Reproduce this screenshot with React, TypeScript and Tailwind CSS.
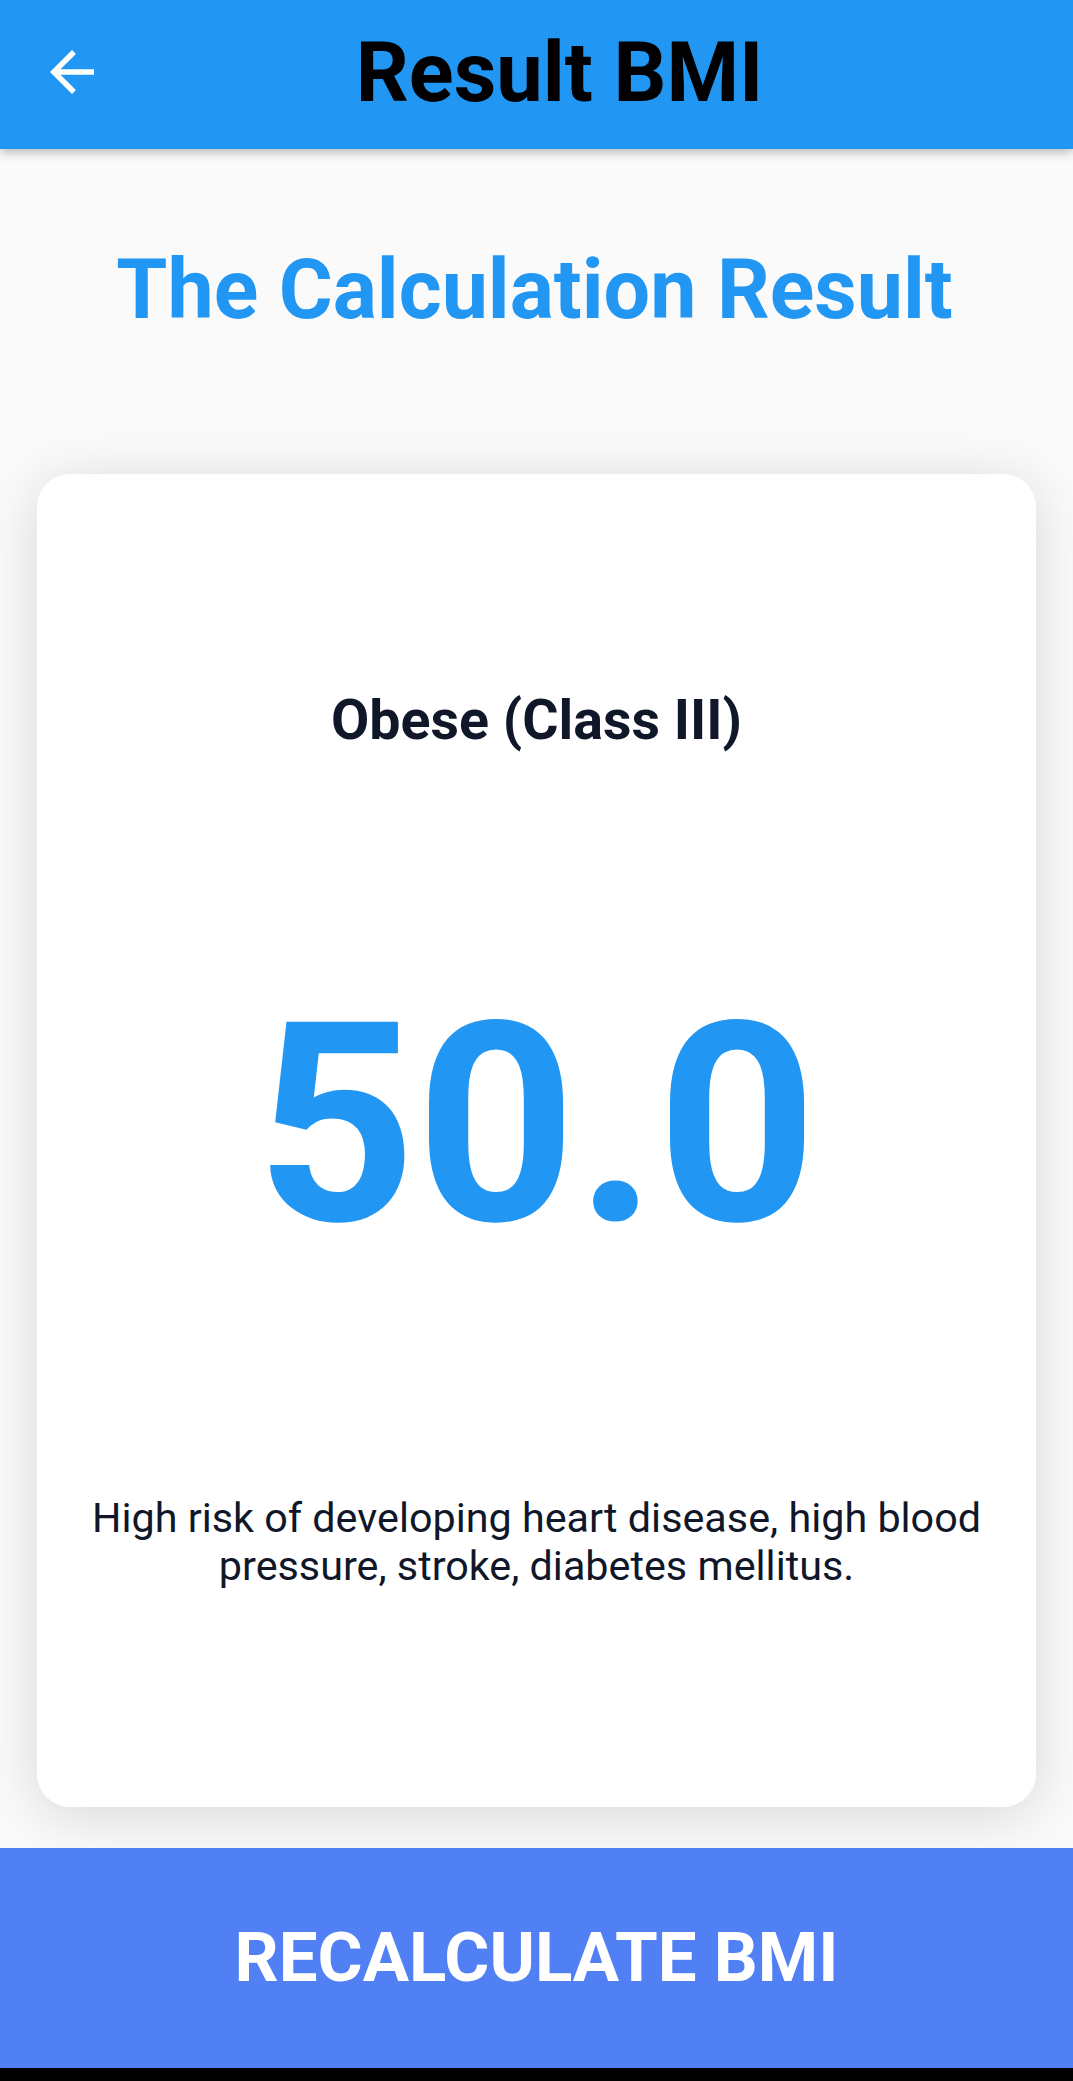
// Result screen of the BMI calculator: app bar, heading, result card, action bar.

type Result = {
  category: string;
  value: number;
  advice: string;
};

const result: Result = {
  category: "Obese (Class III)",
  value: 50.0,
  advice: "High risk of developing heart disease, high blood pressure, stroke, diabetes mellitus.",
};

function BackIcon() {
  return (
    <svg viewBox="0 0 24 24" className="h-[66px] w-[66px] fill-white">
      <path d="M20 11H7.83l5.59-5.59L12 4l-8 8 8 8 1.41-1.41L7.83 13H20v-2z" />
    </svg>
  );
}

function AppBar() {
  return (
    <header className="relative z-10 flex h-[149px] items-center bg-[#2196F3] pb-[5px] shadow-[0_3px_10px_rgba(0,0,0,0.28)]">
      <button type="button" className="absolute left-[39px] top-[39px] flex items-center justify-center">
        <BackIcon />
      </button>
      <h1 className="w-full pl-[46px] text-center text-[83px] font-bold leading-none text-black">Result BMI</h1>
    </header>
  );
}

function ResultCard({ data }: { data: Result }) {
  return (
    <section className="mx-[37px] flex h-[1333px] flex-col items-center rounded-[33px] bg-white px-[36px] shadow-[0_8px_55px_rgba(0,0,0,0.14)]">
      <p className="mt-[219px] text-[55.5px] font-bold leading-none text-[#0F1729]">{data.category}</p>
      <p className="mt-[237px] text-[279px] font-bold leading-none text-[#2196F3]">{data.value.toFixed(1)}</p>
      <p className="mt-[230px] text-center text-[41.3px] leading-[48px] text-[#0F1729]">{data.advice}</p>
    </section>
  );
}

export default function App() {
  return (
    <div className="flex min-h-screen flex-col bg-[#FAFAFA] font-['Roboto',sans-serif]">
      <AppBar />
      <h2 className="mt-[100px] pr-[4px] text-center text-[82.5px] font-bold leading-none text-[#2196F3]">
        The Calculation Result
      </h2>
      <div className="mt-[142px]">
        <ResultCard data={result} />
      </div>
      <button
        type="button"
        className="mt-[41px] flex h-[220px] w-full items-center justify-center bg-[#5180F5] text-[69px] font-bold leading-none text-white"
      >
        RECALCULATE BMI
      </button>
      <div className="h-[14px] bg-black" />
    </div>
  );
}
